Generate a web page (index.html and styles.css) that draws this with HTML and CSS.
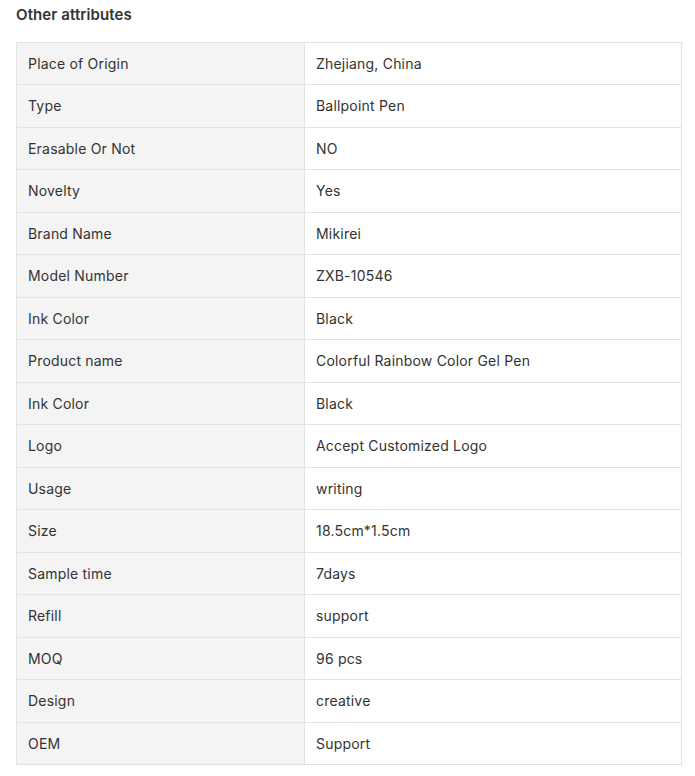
FILE: index.html
```html
<!DOCTYPE html>
<html>
<head>
<meta charset="utf-8">
<link rel="stylesheet" href="styles.css">
</head>
<body>
<section class="attrs">
  <h2 class="attrs-title">Other attributes</h2>
  <table class="attrs-table">
    <tbody>
      <tr><td class="k">Place of Origin</td><td class="v">Zhejiang, China</td></tr>
      <tr><td class="k">Type</td><td class="v">Ballpoint Pen</td></tr>
      <tr><td class="k">Erasable Or Not</td><td class="v">NO</td></tr>
      <tr><td class="k">Novelty</td><td class="v">Yes</td></tr>
      <tr><td class="k">Brand Name</td><td class="v">Mikirei</td></tr>
      <tr><td class="k">Model Number</td><td class="v">ZXB-10546</td></tr>
      <tr><td class="k">Ink Color</td><td class="v">Black</td></tr>
      <tr><td class="k">Product name</td><td class="v">Colorful Rainbow Color Gel Pen</td></tr>
      <tr><td class="k">Ink Color</td><td class="v">Black</td></tr>
      <tr><td class="k">Logo</td><td class="v">Accept Customized Logo</td></tr>
      <tr><td class="k">Usage</td><td class="v">writing</td></tr>
      <tr><td class="k">Size</td><td class="v">18.5cm*1.5cm</td></tr>
      <tr><td class="k">Sample time</td><td class="v">7days</td></tr>
      <tr><td class="k">Refill</td><td class="v">support</td></tr>
      <tr><td class="k">MOQ</td><td class="v">96 pcs</td></tr>
      <tr><td class="k">Design</td><td class="v">creative</td></tr>
      <tr><td class="k">OEM</td><td class="v">Support</td></tr>
    </tbody>
  </table>
</section>
</body>
</html>
```
FILE: styles.css
```css
html, body {
  margin: 0;
  padding: 0;
  background: #fff;
}
body {
  font-family: Inter, "Noto Sans", sans-serif;
  color: #222;
}
.attrs {
  padding: 0 13px 0 16px;
}
.attrs-title {
  margin: 0;
  padding-top: 6px;
  height: 42px;
  box-sizing: border-box;
  font-size: 15px;
  line-height: 18px;
  font-weight: 600;
  color: #333;
  letter-spacing: 0.1px;
}
.attrs-table {
  width: 100%;
  border-collapse: collapse;
  font-size: 14px;
  color: #333;
  letter-spacing: 0.2px;
}
.attrs-table td {
  border: 1px solid #e2e2e2;
  padding: 10px 11px;
  line-height: 21.47px;
  vertical-align: middle;
}
.attrs-table .k {
  width: 265px;
  background: #f4f4f4;
}
.attrs-table .v {
  background: #fff;
}
```
